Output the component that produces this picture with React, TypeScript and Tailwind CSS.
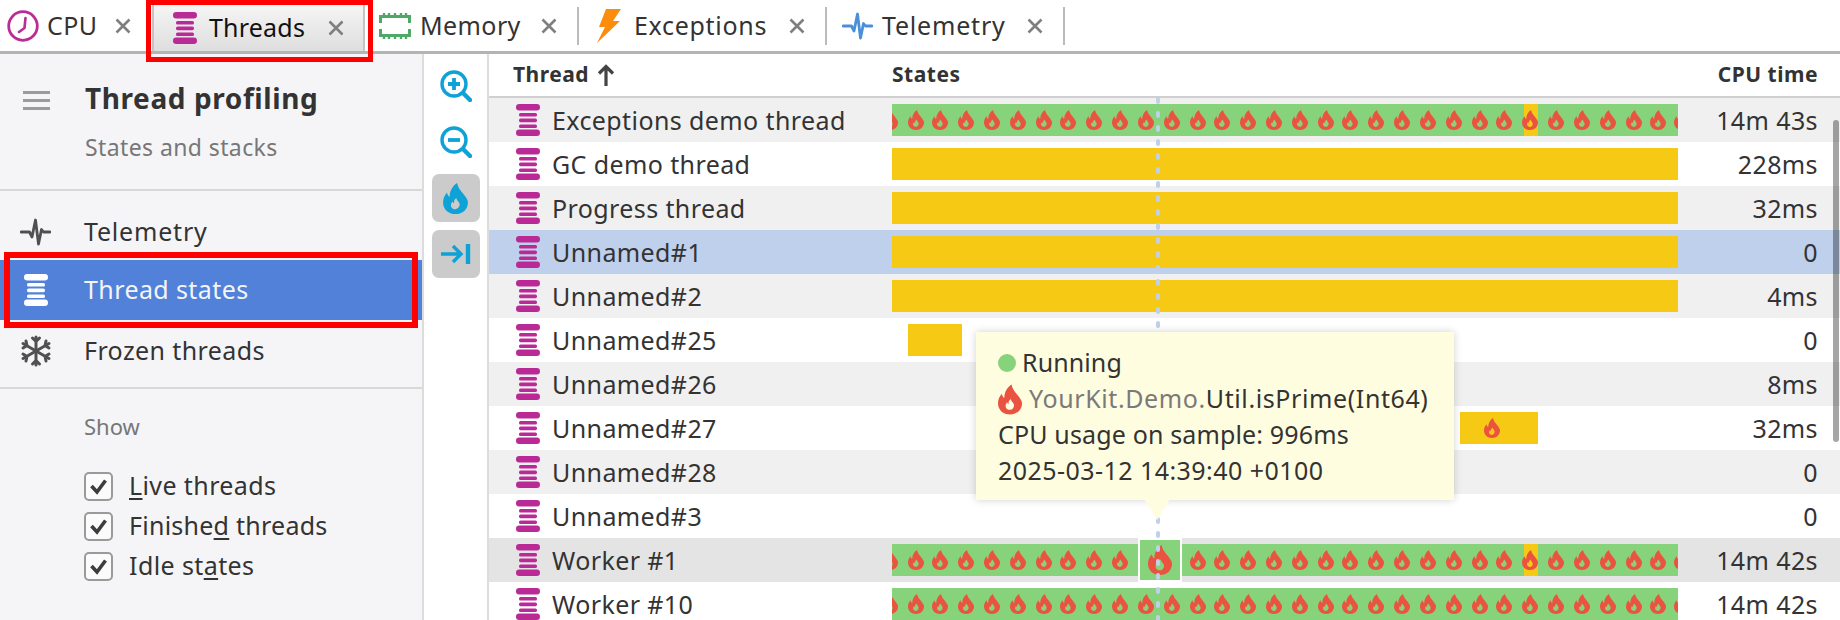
import React from "react";

const FLAME =
  "M9 0C9.6 3 11 4.5 13 7C15 9.5 16 11 16 12.5C16 17 12.5 20 8 20C3.5 20 0 17 0 12.5C0 9.8 1.2 7.8 2.5 6.2C2.8 7.5 3.2 8.4 4.2 9C4.2 5.5 5.8 2.2 9 0ZM8.5 9.6C8.6 10.8 9.8 11.6 10.4 12.8C11.2 14.4 10.1 16.7 8 16.9C6.1 17 4.8 15.4 5.1 13.8C5.3 12.9 5.7 12.4 6.1 11.9C6.3 12.6 6.6 12.9 7 13.1C7 11 7.4 10.5 8.5 9.6Z";

const CENTERS = [890, 916, 940, 966, 992, 1018, 1044, 1068, 1094, 1120, 1146, 1172, 1198, 1222, 1248, 1274, 1300, 1326, 1350, 1376, 1402, 1428, 1454, 1480, 1504, 1530, 1556, 1582, 1608, 1634, 1658, 1682];

const GREEN = "#87d37c";
const YELLOW = "#f6c915";
const RED = "#ea5340";

function Flame({ w, h, color = RED }: { w: number; h: number; color?: string }) {
  return (
    <svg width={w} height={h} viewBox="0 0 16 20" className="shrink-0">
      <path d={FLAME} fill={color} fillRule="evenodd" />
    </svg>
  );
}

function ThreadIcon({ color = "#b92a96" }: { color?: string }) {
  return (
    <svg width="24" height="32" viewBox="0 0 24 32" className="shrink-0">
      <rect x="0" y="0" width="24" height="6.5" rx="3.2" fill={color} />
      <rect x="3" y="9" width="18" height="3.6" rx="1.6" fill={color} />
      <rect x="3" y="14.6" width="18" height="3.6" rx="1.6" fill={color} />
      <rect x="3" y="20.4" width="18" height="3.6" rx="1.6" fill={color} />
      <rect x="0" y="25.5" width="24" height="6.5" rx="3.2" fill={color} />
    </svg>
  );
}

function CloseX() {
  return (
    <svg width="16" height="16" viewBox="0 0 16 16" className="shrink-0">
      <path d="M1.5 1.5L14.5 14.5M14.5 1.5L1.5 14.5" stroke="#7f7f7f" strokeWidth="2.6" fill="none" />
    </svg>
  );
}

function ClockIcon() {
  return (
    <svg width="32" height="32" viewBox="0 0 32 32" className="shrink-0">
      <circle cx="16" cy="16" r="14.3" stroke="#bb2d95" strokeWidth="2.8" fill="none" />
      <path d="M18.5 8L17.5 18L12 22" stroke="#bb2d95" strokeWidth="2.6" fill="none" strokeLinecap="round" strokeLinejoin="round" />
    </svg>
  );
}

function ChipIcon() {
  return (
    <svg width="32" height="26" viewBox="0 0 32 26" className="shrink-0">
      <rect x="1.5" y="3.5" width="29" height="19" fill="none" stroke="#4fa866" strokeWidth="3" />
      <path d="M5 0V3M10 0V3M16 0V3M22 0V3M27 0V3M5 23V26M10 23V26M16 23V26M22 23V26M27 23V26" stroke="#4fa866" strokeWidth="2.4" />
      <rect x="0" y="10" width="3" height="6" fill="#fff" />
      <rect x="29" y="10" width="3" height="6" fill="#fff" />
    </svg>
  );
}

function BoltIcon() {
  return (
    <svg width="24" height="34" viewBox="0 0 24 34" className="shrink-0">
      <path d="M9 0H24L16 12H23L0 34L8 18H2Z" fill="#fb8c0c" />
    </svg>
  );
}

function PulseIcon({ color, w = 31, h = 30 }: { color: string; w?: number; h?: number }) {
  return (
    <svg width={w} height={h} viewBox="0 0 31 30" className="shrink-0">
      <path d="M1 15H9.5L12 20L15.5 3L18.5 27L21.5 12.5L23.5 15H30" stroke={color} strokeWidth="2.8" fill="none" strokeLinejoin="round" strokeLinecap="round" />
    </svg>
  );
}

function SnowIcon() {
  return (
    <svg width="32" height="32" viewBox="0 0 32 32" className="shrink-0">
      <g stroke="#505050" strokeWidth="3" fill="none" strokeLinecap="round" strokeLinejoin="round">
        <path d="M16 2V30M12.5 3L16 6.5L19.5 3M12.5 29L16 25.5L19.5 29" />
        <path d="M3 8.5L29 23.5M3 13L7 10.5L6 6M29 19L25 21.5L26 26" />
        <path d="M3 23.5L29 8.5M3 19L7 21.5L6 26M29 13L25 10.5L26 6" />
      </g>
    </svg>
  );
}

function Magnifier({ plus }: { plus: boolean }) {
  return (
    <svg width="32" height="32" viewBox="0 0 32 32">
      <g stroke="#0ea2d6" fill="none">
        <circle cx="14" cy="14" r="12" strokeWidth="3.4" />
        <path d="M23.5 23.5L30 30" strokeWidth="4.4" strokeLinecap="round" />
        <path d={plus ? "M8 14H20M14 8V20" : "M8 14H20"} strokeWidth="3.8" />
      </g>
    </svg>
  );
}

function Check({ label }: { label: React.ReactNode }) {
  return (
    <div className="flex h-[40px] items-center">
      <div className="flex h-[29px] w-[29px] items-center justify-center rounded-[5px] border-2 border-[#9a9a9a] bg-[#fbfbfb]">
        <svg width="19" height="17" viewBox="0 0 19 17">
          <path d="M2.5 8L8 14L16.5 2.5" stroke="#3d3d3d" strokeWidth="3.6" fill="none" />
        </svg>
      </div>
      <span className="ml-[16px] whitespace-nowrap text-[#333]">{label}</span>
    </div>
  );
}

function Under({ children }: { children: React.ReactNode }) {
  return <span className="underline decoration-2 underline-offset-[3px]">{children}</span>;
}

function FlameBar({ orange }: { orange?: boolean }) {
  return (
    <svg width="786" height="32" viewBox="0 0 786 32" className="block">
      <rect x="0" y="0" width="786" height="32" fill={GREEN} />
      {orange ? <rect x="632" y="0" width="14" height="32" fill={YELLOW} /> : null}
      {CENTERS.map((c) => (
        <path key={c} d={FLAME} fill={RED} fillRule="evenodd" transform={`translate(${c - 892 - 8} 6)`} />
      ))}
    </svg>
  );
}

type Row = { name: string; time: string; bg: string; bar: React.ReactNode };

const Full = <div className="h-[32px] w-[786px] bg-[#f6c915]" />;

const ROWS: Row[] = [
  { name: "Exceptions demo thread", time: "14m 43s", bg: "bg-[#f0f0f0]", bar: <FlameBar orange /> },
  { name: "GC demo thread", time: "228ms", bg: "bg-white", bar: Full },
  { name: "Progress thread", time: "32ms", bg: "bg-[#f0f0f0]", bar: Full },
  { name: "Unnamed#1", time: "0", bg: "bg-[#bfd0ec]", bar: Full },
  { name: "Unnamed#2", time: "4ms", bg: "bg-[#f0f0f0]", bar: Full },
  { name: "Unnamed#25", time: "0", bg: "bg-white", bar: <div className="ml-[16px] h-[32px] w-[54px] bg-[#f6c915]" /> },
  { name: "Unnamed#26", time: "8ms", bg: "bg-[#f0f0f0]", bar: null },
  {
    name: "Unnamed#27",
    time: "32ms",
    bg: "bg-white",
    bar: (
      <div className="ml-[568px] flex h-[32px] w-[78px] items-center bg-[#f6c915] pl-[24px]">
        <Flame w={16} h={20} />
      </div>
    ),
  },
  { name: "Unnamed#28", time: "0", bg: "bg-[#f0f0f0]", bar: null },
  { name: "Unnamed#3", time: "0", bg: "bg-white", bar: null },
  { name: "Worker #1", time: "14m 42s", bg: "bg-[#e4e4e4]", bar: <FlameBar orange /> },
  { name: "Worker #10", time: "14m 42s", bg: "bg-white", bar: <FlameBar /> },
];

export default function App() {
  return (
    <div
      className="relative flex h-[620px] w-[1840px] flex-col overflow-hidden bg-white text-[25px] tracking-[0.4px] text-[#333]"
      style={{ fontFamily: '"Noto Sans", sans-serif' }}
    >
      {/* Tab strip */}
      <div className="flex h-[54px] shrink-0 items-start border-b-[3px] border-[#b4b4b4] pb-0">
        <div className="flex h-[51px] w-[152px] items-center pl-[7px]">
          <ClockIcon />
          <span className="ml-[8px] w-[61px]">CPU</span>
          <span className="ml-[7px]"><CloseX /></span>
        </div>
        <div className="mt-[5px] flex h-[46px] w-[213px] items-center border-x-2 border-[#c4c4c4] bg-gradient-to-b from-[#f5f5f5] to-[#dedede] pl-[19px]">
          <ThreadIcon />
          <span className="ml-[12px] w-[109px] tracking-[0.2px] text-[#111]">Threads</span>
          <span className="ml-[10px]"><CloseX /></span>
        </div>
        <div className="flex h-[51px] items-center pl-[14px]">
          <ChipIcon />
          <span className="ml-[9px] w-[121px]">Memory</span>
          <CloseX />
          <span className="ml-[20px] h-[38px] w-[2px] bg-[#bbb]" />
        </div>
        <div className="flex h-[51px] items-center pl-[18px]">
          <BoltIcon />
          <span className="ml-[13px] w-[155px] tracking-[0.7px]">Exceptions</span>
          <CloseX />
          <span className="ml-[20px] h-[38px] w-[2px] bg-[#bbb]" />
        </div>
        <div className="flex h-[51px] items-center pl-[15px]">
          <PulseIcon color="#4a90d9" />
          <span className="ml-[9px] w-[145px] tracking-[0.8px]">Telemetry</span>
          <CloseX />
          <span className="ml-[20px] h-[38px] w-[2px] bg-[#bbb]" />
        </div>
      </div>

      <div className="flex min-h-0 flex-1">
        {/* Sidebar */}
        <aside className="flex w-[424px] shrink-0 flex-col border-r-2 border-[#dcdcdc] bg-[#f5f5f7]">
          <div className="flex h-[137px] shrink-0 border-b-2 border-[#d8d8d8]">
            <div className="ml-[23px] mt-[37px] flex h-[19px] w-[27px] flex-col justify-between">
              <span className="h-[3px] bg-[#9a9a9a]" />
              <span className="h-[3px] bg-[#9a9a9a]" />
              <span className="h-[3px] bg-[#9a9a9a]" />
            </div>
            <div className="ml-[35px]">
              <div className="mt-[25px] h-[38px] whitespace-nowrap text-[28px] font-bold leading-[38px] tracking-[0.6px] text-[#333]">Thread profiling</div>
              <div className="mt-[13px] whitespace-nowrap text-[23px] leading-[34px] tracking-[0.4px] text-[#777]">States and stacks</div>
            </div>
          </div>
          <div className="flex h-[198px] shrink-0 flex-col border-b-2 border-[#d8d8d8] pt-[13px]">
            <div className="flex h-[56px] items-center pl-[20px]">
              <PulseIcon color="#505050" />
              <span className="ml-[33px] tracking-[0.8px]">Telemetry</span>
            </div>
            <div className="flex h-[60px] items-center bg-[#5181d8] pl-[24px] text-[#f4f4f4]">
              <ThreadIcon color="#ffffff" />
              <span className="ml-[36px]">Thread states</span>
            </div>
            <div className="flex h-[62px] items-center pl-[20px]">
              <SnowIcon />
              <span className="ml-[32px]">Frozen threads</span>
            </div>
          </div>
          <div className="pl-[84px]">
            <div className="mt-[20px] text-[22px] leading-[34px] tracking-normal text-[#777]">Show</div>
            <div className="mt-[23px]">
              <Check label={<><Under>L</Under>ive threads</>} />
              <Check label={<span className="tracking-[0.25px]">Finishe<Under>d</Under> threads</span>} />
              <Check label={<>Idle st<Under>a</Under>tes</>} />
            </div>
          </div>
        </aside>

        {/* Tool column */}
        <div className="flex w-[65px] shrink-0 flex-col items-center border-r-2 border-[#dcdcdc] bg-white pr-[0px]">
          <div className="mt-[16px]"><Magnifier plus /></div>
          <div className="mt-[24px]"><Magnifier plus={false} /></div>
          <div className="mt-[16px] flex h-[48px] w-[48px] items-center justify-center rounded-[7px] bg-[#cbcbcb]">
            <Flame w={25} h={31} color="#0ea2d6" />
          </div>
          <div className="mt-[8px] flex h-[48px] w-[48px] items-center justify-center rounded-[7px] bg-[#cbcbcb]">
            <svg width="30" height="20" viewBox="0 0 30 20">
              <path d="M0 10H19M12 2L20 10L12 18" stroke="#0ea2d6" strokeWidth="3.4" fill="none" />
              <path d="M27 0V20" stroke="#0ea2d6" strokeWidth="4.4" />
            </svg>
          </div>
        </div>

        {/* Table */}
        <div className="relative min-w-0 flex-1 overflow-hidden">
          <div className="flex h-[44px] items-center border-b-2 border-[#d0d0d0] text-[21px] font-bold tracking-[0.5px] text-[#333]">
            <div className="flex w-[403px] items-center pl-[24px]">
              <span>Thread</span>
              <svg width="18" height="22" viewBox="0 0 18 22" className="ml-[8px]">
                <path d="M9 22V3M2 9.5L9 2.5L16 9.5" stroke="#444" strokeWidth="3.2" fill="none" />
              </svg>
            </div>
            <div className="w-[786px]">States</div>
            <div className="flex-1 whitespace-nowrap pr-[22px] text-right">CPU time</div>
          </div>

          {ROWS.map((r) => (
            <div key={r.name} className={`flex h-[44px] items-center ${r.bg}`}>
              <div className="flex w-[403px] items-center pl-[27px]">
                <ThreadIcon />
                <span className="ml-[12px] whitespace-nowrap pt-[2px]">{r.name}</span>
              </div>
              <div className="w-[786px]">{r.bar}</div>
              <div className="flex-1 whitespace-nowrap pr-[22px] pt-[2px] text-right">{r.time}</div>
            </div>
          ))}

          {/* Hovered sample */}
          <div className="absolute left-[649px] top-[484px] flex h-[44px] w-[44px] items-center justify-center border-2 border-white bg-[#87d37c]">
            <Flame w={24} h={32} />
          </div>

          {/* Time cursor */}
          <svg width="6" height="524" className="absolute left-[666px] top-[43px]">
            <line x1="3" y1="2" x2="3" y2="524" stroke="#bfd0ec" strokeWidth="4" strokeLinecap="round" strokeDasharray="3 11" />
          </svg>

          {/* Tooltip */}
          <div className="absolute left-[487px] top-[278px] h-[168px] w-[478px] bg-[#fffde0] pl-[22px] pt-[13px] text-[#333] shadow-[0_0_8px_rgba(0,0,0,0.18)]">
            <div className="flex h-[36px] items-center">
              <span className="h-[18px] w-[18px] rounded-full bg-[#87d37c]" />
              <span className="ml-[6px] tracking-[0.1px]">Running</span>
            </div>
            <div className="flex h-[36px] items-center whitespace-nowrap tracking-[0.6px]">
              <Flame w={24} h={31} />
              <span className="ml-[7px] text-[#7a7a7a]">YourKit.Demo.</span>
              <span>Util.isPrime(Int64)</span>
            </div>
            <div className="flex h-[36px] items-center whitespace-nowrap tracking-[0.15px]">CPU usage on sample: 996ms</div>
            <div className="flex h-[36px] items-center whitespace-nowrap tracking-[0.45px]">2025-03-12 14:39:40 +0100</div>
            <svg width="26" height="21" viewBox="0 0 26 21" className="absolute left-[168px] top-[167px]">
              <path d="M0 0H26L13 21Z" fill="#fffde0" />
            </svg>
          </div>

          {/* Scrollbar thumb */}
          <div className="absolute left-[1344px] top-[66px] h-[322px] w-[6px] rounded-[3px] bg-black/35" />
        </div>
      </div>

      {/* Red annotation frames */}
      <div className="pointer-events-none absolute left-[146px] top-0 h-[62px] w-[227px] border-[5px] border-[#ff0000]" />
      <div className="pointer-events-none absolute left-[4px] top-[252px] h-[76px] w-[414px] border-[6px] border-[#ff0000]">
        <div className="h-[2px] bg-[#f5f5f7]" />
        <div className="mt-[60px] h-[2px] bg-[#f5f5f7]" />
      </div>
    </div>
  );
}
